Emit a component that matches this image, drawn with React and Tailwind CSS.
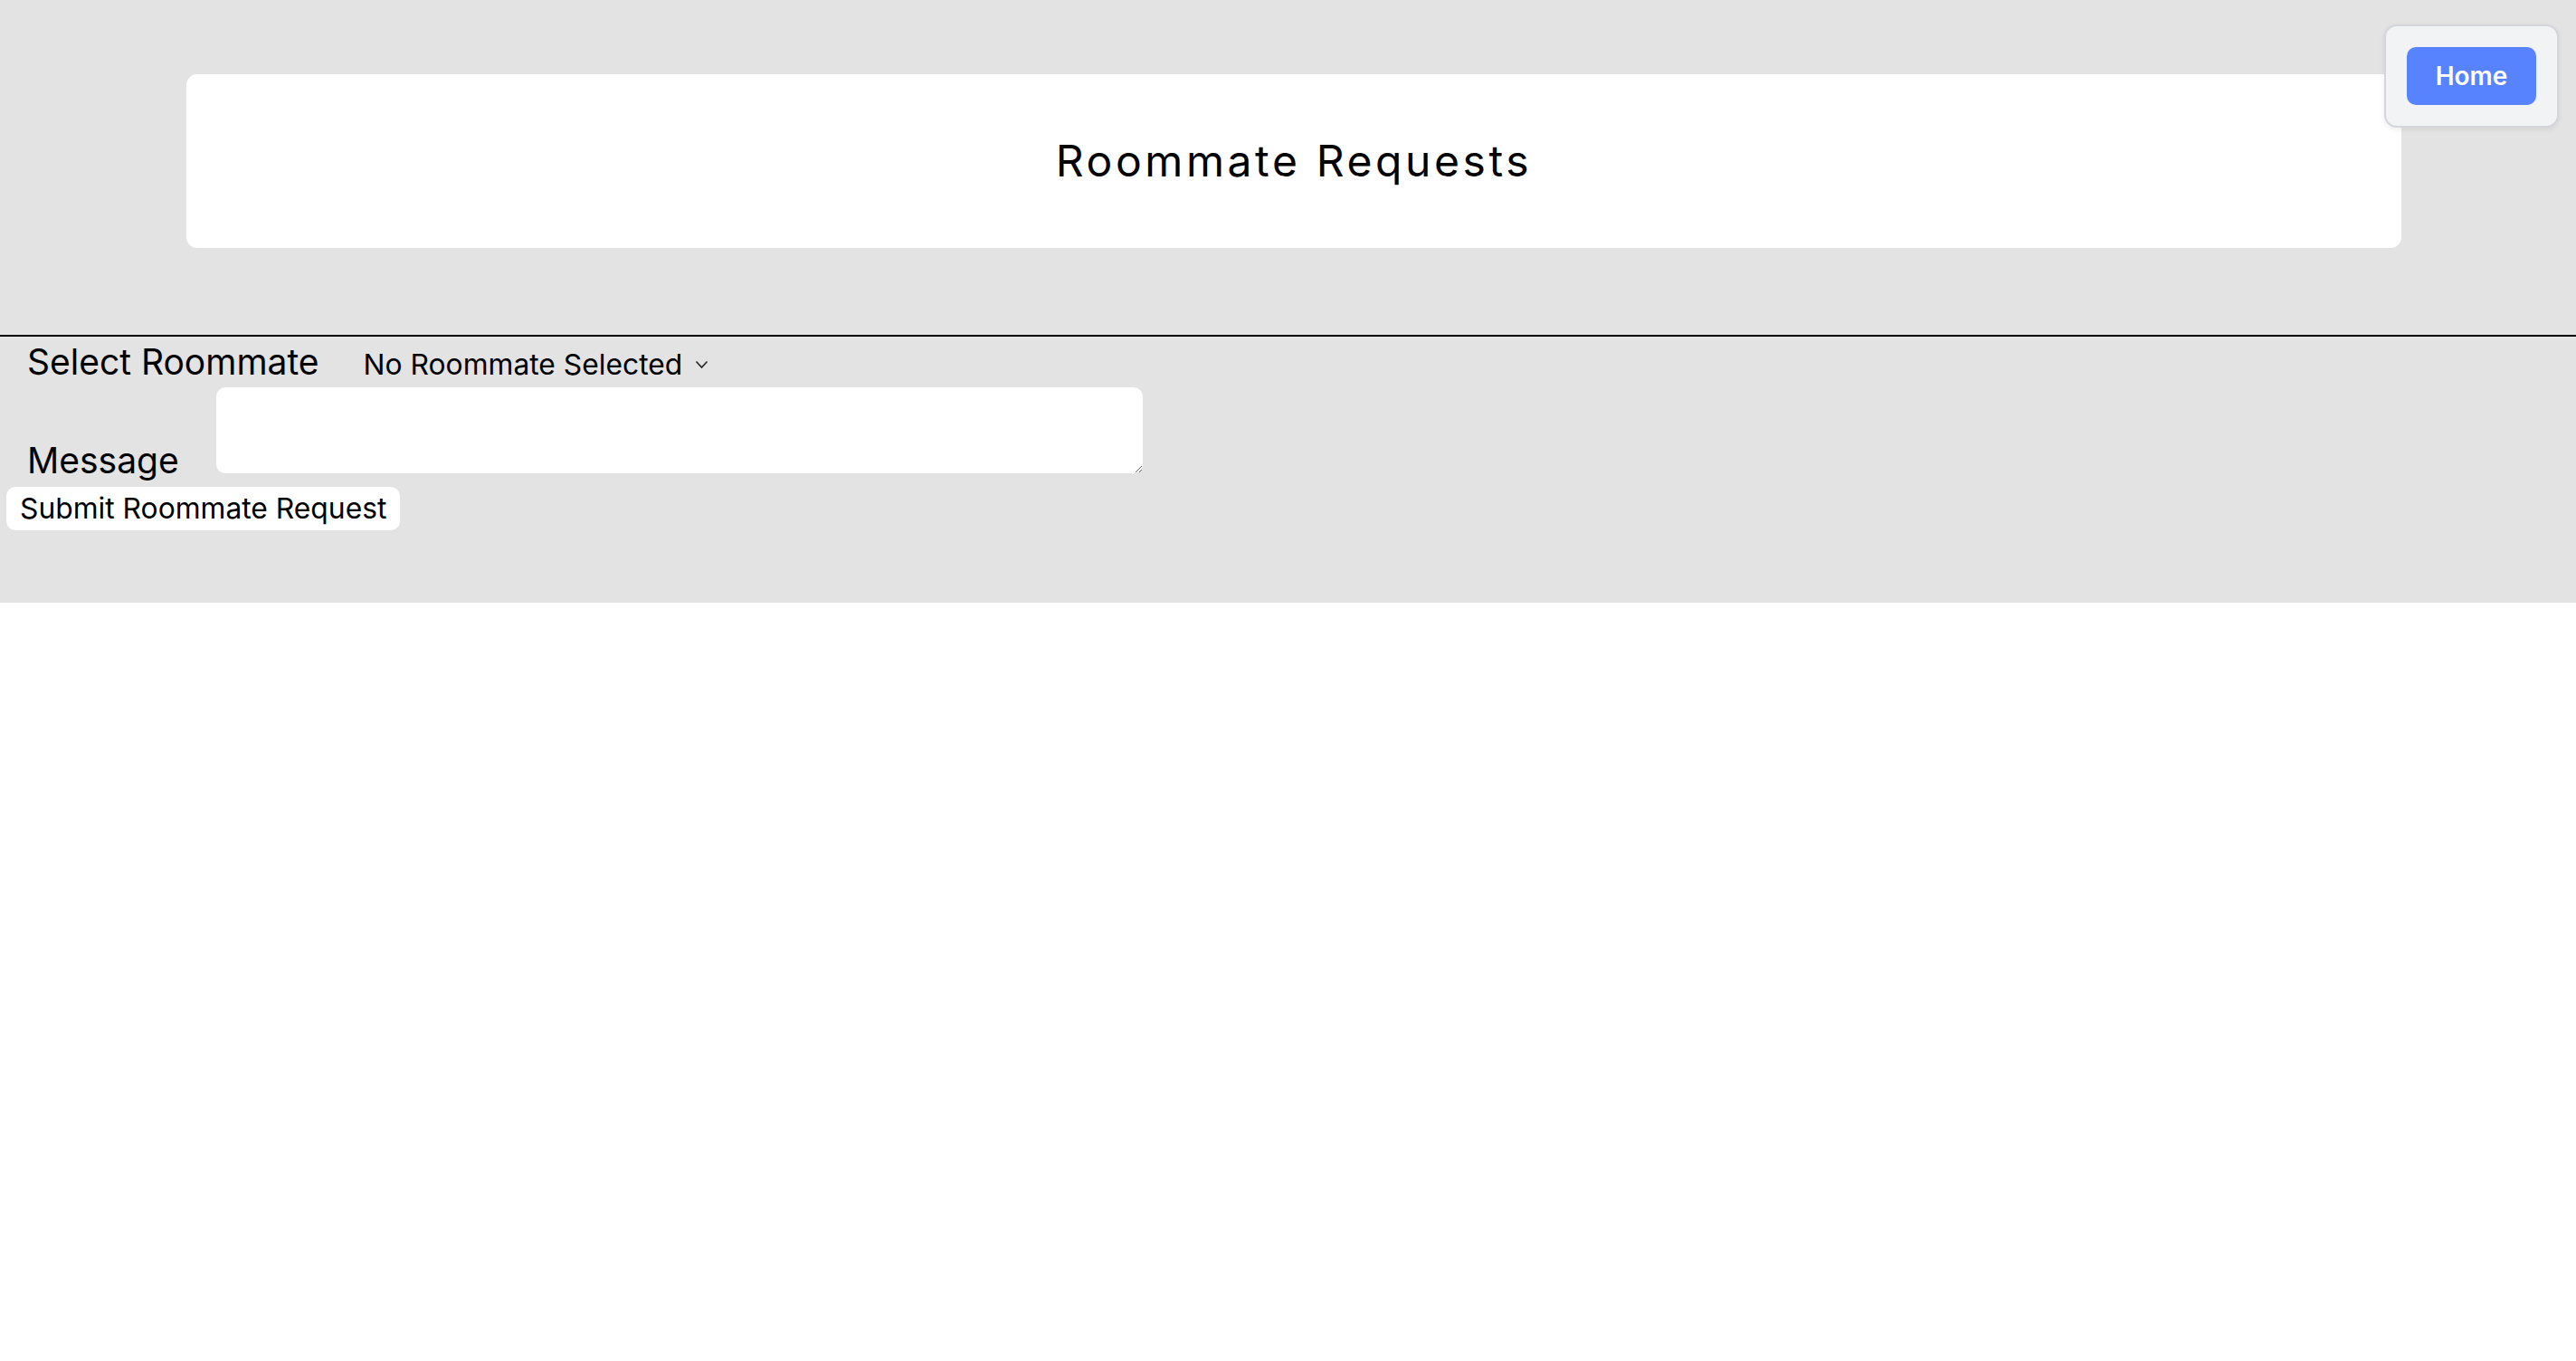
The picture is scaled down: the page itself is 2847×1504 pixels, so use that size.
import { useState } from 'react';

function HomePanel() {
	return (
		<div className="absolute right-[19px] top-[27px] rounded-[14px] border-2 border-[#d4d6dc] bg-[#f2f3f5] p-[23px] shadow-[0_2px_6px_rgba(0,0,0,0.08)]">
			<button
				type="button"
				className="flex h-[64px] w-[143px] items-center justify-center rounded-[10px] bg-[#5783ff] text-[28px] font-semibold leading-none text-white"
			>
				Home
			</button>
		</div>
	);
}

export default function App() {
	const [message, setMessage] = useState('');

	return (
		<div className="relative font-['Inter','Noto_Sans',sans-serif] text-black">
			<div className="bg-[#e3e3e3]">
				<header className="border-b-2 border-black pb-[96px] pt-[82px]">
					<div className="ml-[206px] flex h-[192px] w-[2448px] items-center justify-center rounded-[12px] bg-white">
						<h1 className="text-[48px] font-normal leading-none tracking-[0.075em]">Roommate Requests</h1>
					</div>
				</header>

				<form className="pb-[80px]" onSubmit={(event) => event.preventDefault()}>
					<div className="flex items-baseline pl-[30px] pt-[6px]">
						<label className="text-[39px] leading-[44px]">Select Roommate</label>
						<div className="ml-[49px] flex items-center text-[31.8px] leading-[36px]">
							<span>No Roommate Selected</span>
							<svg className="ml-[14px] h-[10px] w-[15px]" viewBox="0 0 15 10" fill="none" stroke="#222" strokeWidth="1.6">
								<path d="M1.5 1.5 7.5 8l6-6.5" />
							</svg>
						</div>
					</div>

					<div className="mt-[6px] flex items-end pl-[30px]">
						<label className="mb-[-4px] text-[39px] leading-[36px]">Message</label>
						<textarea
							value={message}
							onChange={(event) => setMessage(event.target.value)}
							className="ml-[41px] h-[95px] w-[1024px] rounded-[10px] bg-white p-2 text-[20px] outline-none"
						/>
					</div>

					<button
						type="submit"
						className="ml-[7px] mt-[15px] h-[48px] rounded-[10px] bg-white px-[15px] text-[31.8px] leading-[36px]"
					>
						Submit Roommate Request
					</button>
				</form>
			</div>

			<HomePanel />
		</div>
	);
}
